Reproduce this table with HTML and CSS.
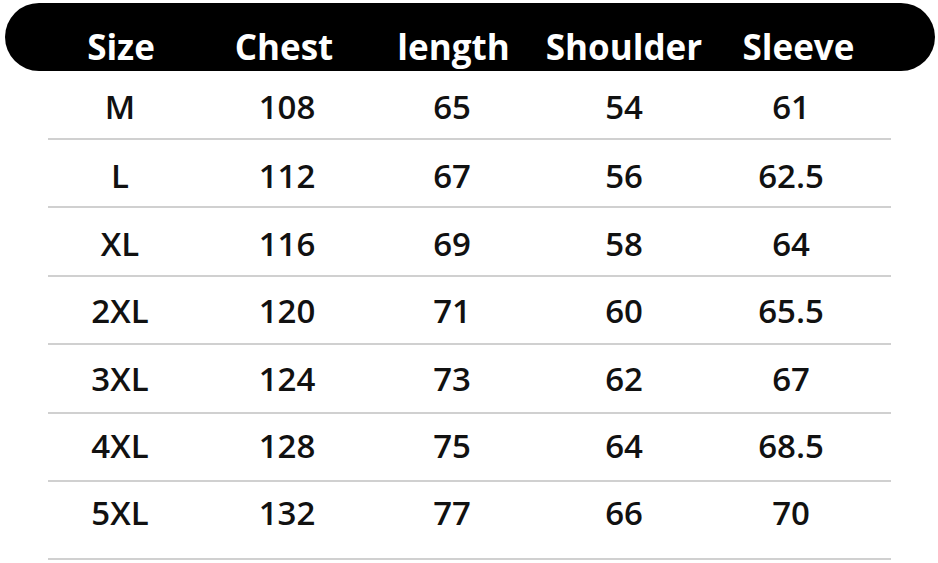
FILE: index.html
```html
<!DOCTYPE html>
<html>
<head>
<meta charset="utf-8">
<link rel="stylesheet" href="styles.css">
</head>
<body>
<div class="chart">
  <div class="head">
    <div class="cols">
      <span>Size</span><span>Chest</span><span>length</span><span>Shoulder</span><span>Sleeve</span>
    </div>
  </div>
  <div class="row"><div class="cols"><span>M</span><span>108</span><span>65</span><span>54</span><span>61</span></div></div>
  <div class="row"><div class="cols"><span>L</span><span>112</span><span>67</span><span>56</span><span>62.5</span></div></div>
  <div class="row"><div class="cols"><span>XL</span><span>116</span><span>69</span><span>58</span><span>64</span></div></div>
  <div class="row up2"><div class="cols"><span>2XL</span><span>120</span><span>71</span><span>60</span><span>65.5</span></div></div>
  <div class="row up2"><div class="cols"><span>3XL</span><span>124</span><span>73</span><span>62</span><span>67</span></div></div>
  <div class="row up4"><div class="cols"><span>4XL</span><span>128</span><span>75</span><span>64</span><span>68.5</span></div></div>
  <div class="row last"><div class="cols"><span>5XL</span><span>132</span><span>77</span><span>66</span><span>70</span></div></div>
</div>
</body>
</html>
```

FILE: styles.css
```css
html, body {
  margin: 0;
  padding: 0;
  background: #fff;
}
.chart {
  width: 938px;
  height: 563px;
  padding-top: 3px;
  box-sizing: border-box;
  font-family: "Open Sans", "Noto Sans", sans-serif;
}
.cols {
  display: grid;
  text-align: center;
}
.head {
  margin: 0 3px 0 5px;
  height: 68px;
  border-radius: 34px;
  background: #000;
  color: #fff;
  font-weight: 700;
  font-size: 35px;
  line-height: 48px;
  padding-top: 20px;
  box-sizing: border-box;
}
.head .cols {
  margin-left: 31px;
  grid-template-columns: 170px 156px 183px 158px 191px;
}
.row {
  margin-left: 48px;
  width: 843px;
  height: 68.5px;
  border-bottom: 2px solid #d0d0d0;
  box-sizing: border-box;
  color: #111;
  font-weight: 600;
  font-size: 33px;
  line-height: 44px;
  padding-top: 14px;
}
.row:first-of-type {
  height: 67px;
}
.row .cols {
  margin-left: -12px;
  grid-template-columns: 168px 166px 164px 180px 154px;
}
.row.up2 {
  padding-top: 12px;
}
.row.up4 {
  padding-top: 10px;
}
.row.last {
  height: 78px;
  padding-top: 9px;
}
```
